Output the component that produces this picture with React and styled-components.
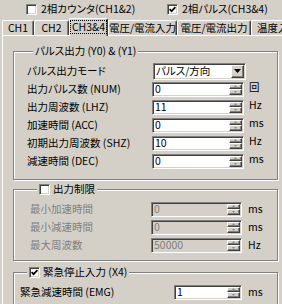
import React from 'react'
import styled, { createGlobalStyle } from 'styled-components'

const GlobalStyle = createGlobalStyle`
  html, body {
    margin: 0;
    padding: 0;
    background: #d4d0c8;
  }
  body {
    font-family: "Noto Sans CJK JP", "Noto Sans", sans-serif;
    font-size: 10.5px;
  }
`

const Screen = styled.div`
  width: 282px;
  height: 304px;
  overflow: hidden;
  background: #d4d0c8;
  color: #000;
  font-feature-settings: "palt";
  line-height: 12px;
`

const TopBar = styled.div`
  display: flex;
  align-items: center;
  height: 18px;
  padding-left: 26px;
`

const Option = styled.div`
  display: flex;
  align-items: center;
  gap: 4px;
  width: ${p => p.$w}px;
  flex: none;
  white-space: nowrap;
`

const Box = styled.span`
  box-sizing: border-box;
  width: 11px;
  height: 11px;
  flex: none;
  display: inline-flex;
  align-items: center;
  justify-content: center;
  background: #fff;
  border-top: 1px solid #808080;
  border-left: 1px solid #808080;
  border-right: 1px solid #fff;
  border-bottom: 1px solid #fff;
  box-shadow: inset 1px 1px #404040, inset -1px -1px #d4d0c8;
`

const TabStrip = styled.div`
  display: flex;
  align-items: flex-end;
  height: 17px;
  padding-left: 2px;
  white-space: nowrap;
`

const Tab = styled.div`
  box-sizing: border-box;
  flex: none;
  width: ${p => p.$w}px;
  height: ${p => (p.$active ? 18 : 15)}px;
  margin-bottom: ${p => (p.$active ? -1 : 0)}px;
  position: relative;
  z-index: ${p => (p.$active ? 1 : 0)};
  display: flex;
  align-items: center;
  justify-content: ${p => (p.$clip ? 'flex-start' : 'center')};
  padding: 0 0 ${p => (p.$active ? 2 : 0)}px ${p => (p.$clip ? 4 : 0)}px;
  overflow: hidden;
  background: #d4d0c8;
  border-top: 1px solid #fff;
  border-left: 1px solid #fff;
  border-right: 1px solid #404040;
  border-radius: 2px 2px 0 0;
  box-shadow: inset -1px 0 #808080;
`

const TabText = styled.span`
  padding: 0 1px;
  outline: ${p => (p.$focus ? '1px dotted #000' : 'none')};
`

const Panel = styled.div`
  margin-left: 2px;
  padding: 8px 0 0 10px;
  border-top: 1px solid #fff;
  border-left: 1px solid #fff;
`

const Group = styled.fieldset`
  box-sizing: border-box;
  width: 265px;
  min-width: 0;
  margin: 0 0 ${p => p.$gap}px 0;
  padding: ${p => p.$pad};
  border: 1px solid #808080;
  box-shadow: 1px 1px #fff, inset 1px 1px #fff;
`

const Legend = styled.legend`
  display: flex;
  align-items: center;
  gap: 3px;
  margin-left: ${p => p.$offset}px;
  padding: 0 2px;
  line-height: 14px;
  background: #d4d0c8;
  white-space: nowrap;
`

const Row = styled.div`
  display: grid;
  grid-template-columns: ${p => p.$label}px ${p => p.$field}px auto;
  align-items: center;
  height: 18px;
  white-space: nowrap;
`

const Label = styled.span`
  color: ${p => (p.$disabled ? '#808080' : '#000')};
`

const Unit = styled.span`
  margin-left: ${p => p.$gap}px;
  align-self: ${p => (p.$raise ? 'start' : 'center')};
  margin-top: ${p => (p.$raise ? 1 : 0)}px;
`

const Field = styled.div`
  box-sizing: border-box;
  display: flex;
  height: ${p => p.$h}px;
  background: ${p => (p.$disabled ? '#d4d0c8' : '#fff')};
  border-top: 1px solid #808080;
  border-left: 1px solid #808080;
  border-right: 1px solid #fff;
  border-bottom: 1px solid #fff;
  box-shadow: inset 1px 1px #404040, inset -1px -1px #d4d0c8;
  padding: 1px;
`

const FieldText = styled.span`
  flex: 1;
  display: flex;
  align-items: center;
  padding-left: 1px;
  color: ${p => (p.$disabled ? '#808080' : '#000')};
`

const Spin = styled.div`
  width: 13px;
  display: flex;
  flex-direction: column;
`

const Raised = styled.div`
  box-sizing: border-box;
  flex: 1;
  display: flex;
  align-items: center;
  justify-content: center;
  background: #d4d0c8;
  border-top: 1px solid #fff;
  border-left: 1px solid #fff;
  border-right: 1px solid #404040;
  border-bottom: 1px solid #404040;
  box-shadow: inset -1px -1px #808080;
`

const DropButton = styled(Raised)`
  flex: none;
  width: 13px;
`

const Check = ({ checked }) => (
  <Box>
    {checked && (
      <svg width="7" height="7" viewBox="0 0 7 7">
        <path d="M0.6 3.2 L2.6 5.2 L6.4 1.2" fill="none" stroke="#000" strokeWidth="1.7" />
      </svg>
    )}
  </Box>
)

const Arrow = ({ up, color = '#8c8c8c', w = 5, h = 3 }) => (
  <svg width={w} height={h} viewBox={`0 0 ${w} ${h}`}>
    <polygon
      points={up ? `${w / 2},0 ${w},${h} 0,${h}` : `0,0 ${w},0 ${w / 2},${h}`}
      fill={color}
    />
  </svg>
)

const SpinField = ({ value, disabled }) => (
  <Field $h={15} $disabled={disabled}>
    <FieldText $disabled={disabled}>{value}</FieldText>
    <Spin>
      <Raised><Arrow up w={3} h={2} /></Raised>
      <Raised><Arrow w={3} h={2} /></Raised>
    </Spin>
  </Field>
)

const Combo = ({ value }) => (
  <Field $h={17}>
    <FieldText>{value}</FieldText>
    <DropButton><Arrow color="#000" w={7} h={4} /></DropButton>
  </Field>
)

const tabs = [
  { label: 'CH1', w: 32 },
  { label: 'CH2', w: 35 },
  { label: 'CH3&4', w: 39, active: true },
  { label: '電圧/電流入力', w: 69 },
  { label: '電圧/電流出力', w: 74 },
  { label: '温度入力', w: 60, clip: true },
]

const pulseRows = [
  { label: '出力パルス数 (NUM)', value: '0', unit: '回' },
  { label: '出力周波数 (LHZ)', value: '11', unit: 'Hz' },
  { label: '加速時間 (ACC)', value: '0', unit: 'ms' },
  { label: '初期出力周波数 (SHZ)', value: '10', unit: 'Hz' },
  { label: '減速時間 (DEC)', value: '0', unit: 'ms' },
]

const limitRows = [
  { label: '最小加速時間', value: '0', unit: 'ms' },
  { label: '最小減速時間', value: '0', unit: 'ms' },
  { label: '最大周波数', value: '50000', unit: 'Hz' },
]

export default function App() {
  return (
    <Screen>
      <GlobalStyle />
      <TopBar>
        <Option $w={141}>
          <Check />
          <span>2相カウンタ(CH1&2)</span>
        </Option>
        <Option $w={115}>
          <Check checked />
          <span>2相パルス(CH3&4)</span>
        </Option>
      </TopBar>

      <TabStrip>
        {tabs.map(t => (
          <Tab key={t.label} $w={t.w} $active={t.active} $clip={t.clip}>
            <TabText $focus={t.active}>{t.label}</TabText>
          </Tab>
        ))}
      </TabStrip>

      <Panel>
        <Group $gap={2} $pad="4px 0 9px 13px">
          <Legend $offset={6}>パルス出力 (Y0) &amp; (Y1)</Legend>
          <Row $label={126} $field={93}>
            <Label>パルス出力モード</Label>
            <Combo value="パルス/方向" />
          </Row>
          {pulseRows.map(r => (
            <Row key={r.label} $label={125} $field={92}>
              <Label>{r.label}</Label>
              <SpinField value={r.value} />
              <Unit $gap={5} $raise>{r.unit}</Unit>
            </Row>
          ))}
        </Group>

        <Group $gap={4} $pad="4px 0 6px 16px">
          <Legend $offset={7}>
            <Check />
            <span>出力制限</span>
          </Legend>
          {limitRows.map(r => (
            <Row key={r.label} $label={121} $field={91}>
              <Label $disabled>{r.label}</Label>
              <SpinField value={r.value} disabled />
              <Unit $gap={6}>{r.unit}</Unit>
            </Row>
          ))}
        </Group>

        <Group $gap={0} $pad="4px 0 8px 6px">
          <Legend $offset={7}>
            <Check checked />
            <span>緊急停止入力 (X4)</span>
          </Legend>
          <Row $label={154} $field={68}>
            <Label>緊急減速時間 (EMG)</Label>
            <SpinField value="1" />
            <Unit $gap={6}>ms</Unit>
          </Row>
        </Group>
      </Panel>
    </Screen>
  )
}
